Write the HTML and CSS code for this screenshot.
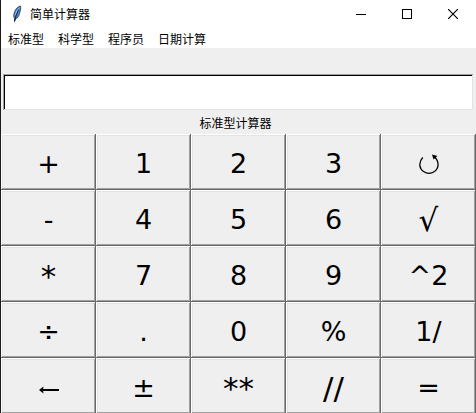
FILE: index.html
```html
<!DOCTYPE html>
<html lang="zh-CN">
<head>
<meta charset="utf-8">
<title>简单计算器</title>
<link rel="stylesheet" href="styles.css">
</head>
<body>
<main class="window">
  <header class="titlebar">
    <svg class="feather" width="10" height="18" viewBox="0 0 10 18" aria-hidden="true">
      <path d="M8.500 1C6 1.500 3.500 4 2.500 7C1.500 10 1.500 12 2.500 13.500L2.500 16.500L3.500 14C5.500 13 7 11 7.500 8.500C8.500 5.500 9 3 8.500 1Z" fill="#4a86d0" stroke="#26344c" stroke-width=".8"/>
      <path d="M8 2C6 3.500 4.500 5 3.500 8L3 11L5 7Z" fill="#a4cdf5"/>
      <path d="M6.500 4.500L4 11L2.500 16.500" fill="none" stroke="#101828" stroke-width=".9"/>
    </svg>
    <h1 class="title">简单计算器</h1>
    <div class="controls">
      <button class="control" type="button" aria-label="最小化"><svg width="10" height="10" shape-rendering="crispEdges"><path d="M0 5.500H10" stroke="#000"/></svg></button>
      <button class="control" type="button" aria-label="最大化"><svg width="10" height="10" shape-rendering="crispEdges"><rect x=".5" y=".5" width="9" height="9" fill="none" stroke="#000"/></svg></button>
      <button class="control" type="button" aria-label="关闭"><svg width="10" height="10"><path d="M0 0L10 10M10 0L0 10" stroke="#000" stroke-width="1.200"/></svg></button>
    </div>
  </header>
  <nav class="menubar">
    <button class="menu" type="button">标准型</button>
    <button class="menu" type="button">科学型</button>
    <button class="menu" type="button">程序员</button>
    <button class="menu" type="button">日期计算</button>
  </nav>
  <section class="panel">
    <input class="display" id="display" type="text">
    <label class="mode" for="display">标准型计算器</label>
    <div class="keys">
      <button class="key" type="button">+</button>
      <button class="key" type="button">1</button>
      <button class="key" type="button">2</button>
      <button class="key" type="button">3</button>
      <button class="key" type="button" aria-label="清空"><svg width="20" height="20" viewBox="0 0 20 20"><path d="M3.800 3.500C-1 8.500.5 15 4.500 17.500C8 19.800 12.500 19.500 15.500 17.500C20 14.200 20.500 7.500 15.500 3" fill="none" stroke="#000" stroke-width="1.300"/><path d="M13 .5L18.500 2L16.800 3.200L17.500 5.500L15.800 4.300L14.500 5.500Z" fill="#000"/></svg></button>

      <button class="key" type="button">-</button>
      <button class="key" type="button">4</button>
      <button class="key" type="button">5</button>
      <button class="key" type="button">6</button>
      <button class="key large" type="button">√</button>

      <button class="key large" type="button">*</button>
      <button class="key" type="button">7</button>
      <button class="key" type="button">8</button>
      <button class="key" type="button">9</button>
      <button class="key" type="button">^2</button>

      <button class="key" type="button">÷</button>
      <button class="key" type="button">.</button>
      <button class="key" type="button">0</button>
      <button class="key" type="button">%</button>
      <button class="key" type="button">1/</button>

      <button class="key" type="button" aria-label="退格"><svg class="back" width="20" height="8" viewBox="0 0 20 8"><path d="M2 4H20" stroke="#000" stroke-width="2"/><path d="M0 4L4.500 .5L4 4L4.500 7.500Z" fill="#000"/></svg></button>
      <button class="key" type="button">±</button>
      <button class="key large" type="button">**</button>
      <button class="key large" type="button">//</button>
      <button class="key" type="button">=</button>
    </div>
  </section>
</main>
</body>
</html>
```
FILE: styles.css
```css
* {
  box-sizing: border-box;
}

body {
  margin: 0;
  height: 100vh;
  overflow: hidden;
  background: #efefef;
  color: #000;
  font: 12px/16px "Noto Sans CJK SC", sans-serif;
}

button {
  margin: 0;
  padding: 0;
  border: 0;
  background: none;
  color: inherit;
  font: inherit;
}

.window {
  min-height: 100vh;
  border-left: 1px solid #1c1a1c;
}

.titlebar {
  display: flex;
  align-items: center;
  height: 28px;
  padding-left: 11px;
  background: #fff;
}

.feather {
  margin-right: 8px;
}

.title {
  margin: 0;
  font-size: 12px;
  font-weight: 400;
}

.controls {
  display: flex;
  margin-left: auto;
}

.control {
  display: flex;
  align-items: center;
  justify-content: center;
  width: 46px;
  height: 28px;
}

.menubar {
  display: flex;
  gap: 14px;
  height: 20px;
  padding: 3px 7px 1px;
  background: #fff;
}

.panel {
  display: flex;
  flex-direction: column;
  padding-top: 26px;
}

.display {
  height: 36px;
  margin: 0 3px 0 2px;
  padding: 0 4px;
  border: 0;
  border-radius: 0;
  outline: 0;
  background: #fff;
  box-shadow: inset 1px 1px #a0a0a0, inset -1px -1px #e3e3e3, inset 2px 2px #000;
  font: 27px "DejaVu Sans", sans-serif;
}

.mode {
  padding: 5px 6px 3px 0;
  text-align: center;
}

.keys {
  display: grid;
  grid-template-columns: repeat(5, 1fr);
  grid-auto-rows: 56px;
}

.key {
  display: flex;
  align-items: center;
  justify-content: center;
  padding: 4px 0 0;
  box-shadow: inset -1px -1px #696969, inset 1px 1px #fff, inset -2px -2px #a0a0a0, inset 2px 2px #e3e3e3;
  font: 27px/32px "DejaVu Sans", sans-serif;
}

.large {
  font-size: 31px;
}

.back {
  margin-top: 4px;
}
```
